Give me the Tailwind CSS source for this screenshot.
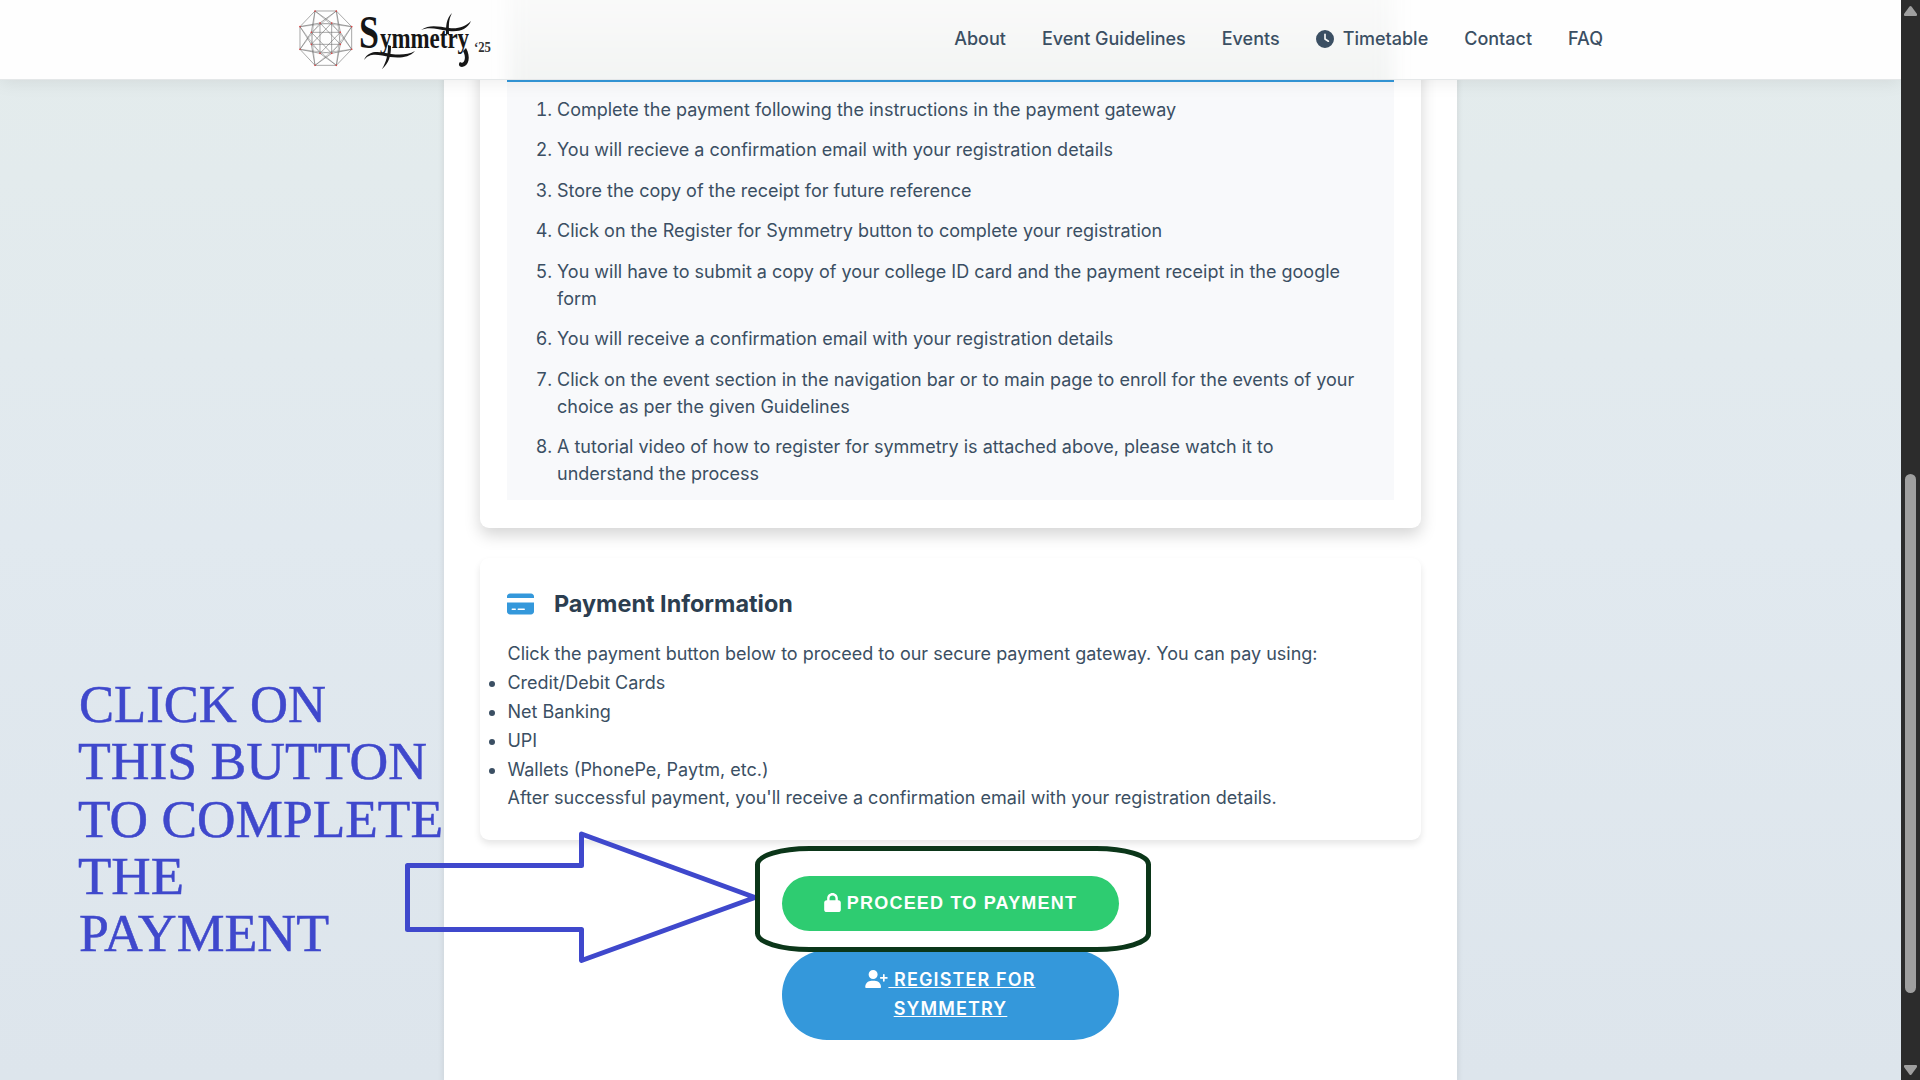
<!DOCTYPE html>
<html lang="en"><head><meta charset="utf-8"><title>Symmetry '25</title>
<script src="https://cdn.jsdelivr.net/npm/@tailwindcss/browser@4"></script></head>
<body class="w-[1920px] h-[1080px] overflow-hidden flex font-['Inter',sans-serif] text-[18px] text-[#3b4f63] bg-[#2c2c2c]">
<div class="relative w-[1901px] h-[1080px] overflow-hidden bg-linear-to-b from-[#e4ecec] via-[#e1e9ef] to-[#dde5ec]">
  <header class="absolute inset-x-0 top-0 z-10 h-[80px] bg-[#fefefe] border-b border-[#e4e7e8] shadow-[0_2px_17px_rgba(0,0,0,0.08)]">
    <div class="absolute inset-0 overflow-hidden"><div class="absolute left-[509px] w-[884px] -top-5 h-[130px] blur-[8px] bg-linear-to-b from-[#fbfbfb] to-[#f0f2f1]"></div></div>
    <div class="relative h-full flex items-center justify-between px-[298px]">
      <svg class="w-[200px] h-[64px] -mt-1" viewBox="298 6 200 64" fill="none">
        <g transform="translate(280 0) scale(.33333)">
          <path stroke="#666" stroke-width="1.700" d="M105 33H169L215 80V148L169 196H105L60 148V80ZM120 69L181 133H94L155 69V160L94 97H181L120 160Z"/>
          <path stroke="#555" stroke-width="1.600" d="M94 97L105 33L155 69M120 69L169 33L181 97M155 69L215 80L181 133M181 97L215 148L155 160M181 133L169 196L120 160M155 160L105 196L94 133M120 160L60 148L94 97M94 133L60 80L120 69"/>
          <path stroke="#777" stroke-width="1.300" d="M94 133L105 33L181 97M94 97L169 33L181 133M120 69L215 80L155 160M155 69L215 148L120 160M181 97L169 196L94 133M181 133L105 196L94 97M155 160L60 148L120 69M120 160L60 80L155 69"/>
          <path stroke="#e04545" stroke-width="5" stroke-linecap="round" d="M105 33h0M169 33h0M215 80h0M215 148h0M169 196h0M105 196h0M60 148h0M60 80h0M120 69h0M155 69h0M181 97h0M181 133h0M155 160h0M120 160h0M94 133h0M94 97h0"/>
        </g>
        <text y="48" font-family="Liberation Serif, serif" font-weight="700" fill="#161616"><tspan x="359" font-size="46" textLength="20" lengthAdjust="spacingAndGlyphs">S</tspan><tspan x="380" font-size="30" textLength="89" lengthAdjust="spacingAndGlyphs">ymmetry</tspan></text>
        <g fill="#161616">
          <path d="M421 30C430 24 439 27 449 28C458 29 465 27 471 21C467 30 459 32 449 31C438 30 430 26 421 30Z"/>
          <path d="M452 13C448 20 449 27 449 34L446 34C446 26 446 19 452 13Z"/>
          <path d="M364 60C369 49 380 52 391 54C400 55 408 55 415 51C409 58 399 58 390 57C379 55 370 52 364 60Z"/>
          <path d="M388 45L391 46C391 56 389 63 382 69C386 62 388 56 388 45Z"/>
          <path d="M466 48C471 57 469 66 462 67C459 67 458 64 460 62C464 65 467 58 463 51Z"/>
        </g>
        <text x="474" y="51.500" font-family="Liberation Serif, serif" font-weight="700" font-size="14" fill="#333" textLength="17" lengthAdjust="spacingAndGlyphs">‘25</text>
      </svg>
      <nav class="flex items-center gap-[36px] font-medium whitespace-nowrap -mt-[2px]">
        <a>About</a><a>Event Guidelines</a><a>Events</a>
        <a class="flex items-center gap-[9px]"><svg class="size-[18px]" viewBox="0 0 512 512" fill="currentColor"><path d="M256 0a256 256 0 1 1 0 512A256 256 0 1 1 256 0zM232 120V256c0 8 4 15.500 10.700 20l96 64c11 7.400 25.900 4.400 33.300-6.700s4.400-25.900-6.700-33.300L280 243.200V120c0-13.300-10.700-24-24-24s-24 10.700-24 24z"/></svg>Timetable</a>
        <a>Contact</a><a>FAQ</a>
      </nav>
    </div>
  </header>
  <main class="w-[1013px] ml-[444px] h-full bg-white shadow-[0_4px_7px_rgba(0,0,0,0.1)] px-[36px]">
    <section class="h-[528px] rounded-b-[9px] px-[27px] pb-[27px] bg-white shadow-[0_7px_16px_rgba(0,0,0,0.17)]">
      <div class="h-[80px]"></div>
      <ol class="h-[420px] border-t-2 border-[#3498db] bg-[#f8f9fb] list-decimal pl-[50px] pr-[27px] pt-[13.800px] leading-[27px] space-y-[13.500px]">
        <li>Complete the payment following the instructions in the payment gateway</li>
        <li>You will recieve a confirmation email with your registration details</li>
        <li>Store the copy of the receipt for future reference</li>
        <li>Click on the Register for Symmetry button to complete your registration</li>
        <li>You will have to submit a copy of your college ID card and the payment receipt in the google form</li>
        <li>You will receive a confirmation email with your registration details</li>
        <li>Click on the event section in the navigation bar or to main page to enroll for the events of your choice as per the given Guidelines</li>
        <li>A tutorial video of how to register for symmetry is attached above, please watch it to understand the process</li>
      </ol>
    </section>
    <section class="mt-[30px] h-[282px] rounded-[9px] px-[27px] pt-[27px] bg-white shadow-[0_4px_7px_rgba(0,0,0,0.1)]">
      <h3 class="flex items-center gap-[20px] h-[37px] text-[23.400px] font-bold text-[#2c3e50]"><svg class="w-[27px] h-[24px]" viewBox="0 0 576 512" fill="#3498db"><path d="M64 32C28.700 32 0 60.700 0 96v32H576V96c0-35.300-28.700-64-64-64H64zM576 224H0V416c0 35.300 28.700 64 64 64H512c35.300 0 64-28.700 64-64V224zM112 352h64c8.800 0 16 7.200 16 16s-7.200 16-16 16H112c-8.800 0-16-7.200-16-16s7.200-16 16-16zm112 16c0-8.800 7.200-16 16-16H368c8.800 0 16 7.200 16 16s-7.200 16-16 16H240c-8.800 0-16-7.200-16-16z"/></svg>Payment Information</h3>
      <p class="mt-[17px] leading-[29px] pl-[0.500px]">Click the payment button below to proceed to our secure payment gateway. You can pay using:</p>
      <ul class="list-disc leading-[29px] pl-[0.400px]"><li>Credit/Debit Cards</li><li>Net Banking</li><li>UPI</li><li>Wallets (PhonePe, Paytm, etc.)</li></ul>
      <p class="leading-[27px] pl-[0.500px]">After successful payment, you'll receive a confirmation email with your registration details.</p>
    </section>
    <div class="mt-[36px] flex flex-col items-center font-semibold text-white tracking-[1.125px]">
      <button class="w-[337px] h-[55px] rounded-full bg-[#2ecc71] flex items-center justify-center gap-[6px] font-['Liberation_Sans',sans-serif] font-bold tracking-[1.200px]"><svg class="w-[17px] h-[19px] -mt-[2px]" viewBox="0 0 448 512" fill="currentColor"><path d="M144 144v48H304V144c0-44.200-35.800-80-80-80s-80 35.800-80 80zM80 192V144C80 64.500 144.500 0 224 0s144 64.500 144 144v48h16c35.300 0 64 28.700 64 64V448c0 35.300-28.700 64-64 64H64c-35.300 0-64-28.700-64-64V256c0-35.300 28.700-64 64-64H80z"/></svg>PROCEED TO PAYMENT</button>
      <a class="mt-[19px] w-[337px] h-[90px] rounded-full bg-[#3498db] pt-[15px] text-center leading-[29px] underline"><svg class="inline w-[23px] h-[18px] -mt-1" viewBox="0 0 640 512" fill="currentColor"><path d="M96 128a128 128 0 1 1 256 0A128 128 0 1 1 96 128zM0 482.300C0 383.800 79.800 304 178.300 304h91.400C368.200 304 448 383.800 448 482.300c0 16.400-13.300 29.700-29.700 29.700H29.700C13.300 512 0 498.700 0 482.300zM504 312V248H440c-13.300 0-24-10.700-24-24s10.700-24 24-24h64V136c0-13.300 10.700-24 24-24s24 10.700 24 24v64h64c13.300 0 24 10.700 24 24s-10.700 24-24 24H552v64c0 13.300-10.700 24-24 24s-24-10.700-24-24z"/></svg> REGISTER FOR<br>SYMMETRY</a>
    </div>
  </main>
  <!-- Tutorial annotations over the page -->
  <svg class="absolute inset-0 z-20 w-[1901px] h-[1080px]" viewBox="0 0 1901 1080" fill="none">
    <path d="M407.500 865.500H581.500V834L755 897.500L581.500 960.500V929.500H407.500Z" stroke="#3f48cc" stroke-width="5" stroke-linejoin="round"/>
    <rect x="757.500" y="848.500" width="391" height="101" rx="52" ry="16" stroke="#0b3619" stroke-width="5"/>
    <g fill="#3f48cc" stroke="#3f48cc" stroke-width=".5" font-family="Liberation Serif, serif" font-size="52.500">
      <text x="79" y="721.500" textLength="247" lengthAdjust="spacingAndGlyphs">CLICK ON</text>
      <text x="78" y="778.500" textLength="349" lengthAdjust="spacingAndGlyphs">THIS BUTTON</text>
      <text x="78" y="836.500" textLength="365" lengthAdjust="spacingAndGlyphs">TO COMPLETE</text>
      <text x="78" y="894" textLength="106" lengthAdjust="spacingAndGlyphs">THE</text>
      <text x="79" y="951" textLength="250" lengthAdjust="spacingAndGlyphs">PAYMENT</text>
    </g>
  </svg>
</div>
<!-- Scrollbar -->
<svg class="w-[19px] h-[1080px]" viewBox="0 0 19 1080" fill="#9f9f9f"><path d="M8.500 6.500Q9.500 5.500 10.500 6.500L16 14Q16.500 16 15 16H4Q2.500 16 3 14Z"/><rect x="4" y="474" width="11" height="519" rx="5.500"/><path d="M8.500 1074.500Q9.500 1075.500 10.500 1074.500L16 1067Q16.500 1065 15 1065H4Q2.500 1065 3 1067Z"/></svg>
</body></html>
